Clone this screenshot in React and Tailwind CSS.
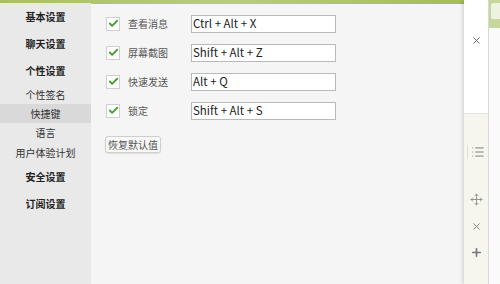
import { Check, X, Plus, Move, List } from "lucide-react";

const font = { fontFamily: '"Microsoft YaHei", "Noto Sans CJK SC", "Liberation Sans", sans-serif' };

const shortcuts = [
    { label: "查看消息", keys: "Ctrl + Alt + X" },
    { label: "屏幕截图", keys: "Shift + Alt + Z" },
    { label: "快速发送", keys: "Alt + Q" },
    { label: "锁定", keys: "Shift + Alt + S" },
];

function SideItem({ children, bold, active }) {
    return (
        <div
            className={`flex items-center justify-center ${bold ? "h-[27px] font-bold text-[10px] text-[#222]" : "h-[19px] text-[10px] text-[#333]"} ${active ? "bg-[#d9d9d9]" : ""}`}
        >
            {children}
        </div>
    );
}

export default function App() {
    return (
        <div className="w-[500px] h-[284px] flex overflow-hidden bg-white" style={font}>
            {/* left + main */}
            <div className="w-[464px] flex flex-col">
                <div className="h-[4px] bg-gradient-to-r from-[#a9c060] via-[#b9cd7c] to-[#a4bd55]" />
                <div className="flex flex-1">
                    <div className="w-[91px] bg-[#e9e9e9] flex flex-col -mt-[1px]">
                        <SideItem bold>基本设置</SideItem>
                        <SideItem bold>聊天设置</SideItem>
                        <SideItem bold>个性设置</SideItem>
                        <div className="h-[1px]" />
                        <SideItem>个性签名</SideItem>
                        <SideItem active>快捷键</SideItem>
                        <SideItem>语言</SideItem>
                        <div className="h-[1px]" />
                        <SideItem>用户体验计划</SideItem>
                        <div className="h-[1px]" />
                        <SideItem bold>安全设置</SideItem>
                        <SideItem bold>订阅设置</SideItem>
                    </div>
                    <div className="flex-1 bg-[#f5f5f5] pl-[15px] pt-[11px]">
                        <div className="flex flex-col gap-[12px]">
                            {shortcuts.map((s) => (
                                <div key={s.label} className="flex items-center h-[17px]">
                                    <div className="w-[14px] h-[14px] bg-white border border-[#d0d0d0] flex items-center justify-center">
                                        <Check size={11} strokeWidth={4} className="text-[#45a02f]" />
                                    </div>
                                    <span className="ml-[8px] w-[63px] text-[10px] text-[#555]">{s.label}</span>
                                    <div className="w-[145px] h-[18px] bg-white border border-[#b9b9b9] flex items-center pl-[1px] text-[11.5px] text-[#222]">
                                        {s.keys}
                                    </div>
                                </div>
                            ))}
                        </div>
                        <button className="mt-[17px] -ml-[1px] h-[17px] px-[2px] border border-[#cfcfcf] rounded-[3px] bg-[#f8f8f8] text-[10px] text-[#555] leading-none shadow-[0_1px_1px_rgba(0,0,0,0.08)]">
                            恢复默认值
                        </button>
                    </div>
                </div>
            </div>
            {/* right strip */}
            <div className="w-[25px] flex flex-col shadow-[-2px_0_3px_rgba(0,0,0,0.12)] border-r border-[#d9d9d0]">
                <div className="h-[113px] bg-white flex flex-col items-center pt-[35px]">
                    <X size={11} strokeWidth={2} className="text-[#666]" />
                </div>
                <div className="flex-1 bg-[#f6f6ef] border-t border-[#e4e4e0] flex flex-col items-center pt-[31px]">
                    <div className="flex items-center">
                        <div className="w-[1px] h-[14px] bg-[#e0e0e0] mr-[3px]" />
                        <List size={14} strokeWidth={1.6} className="text-[#777]" />
                    </div>
                    <Move size={13} strokeWidth={1.6} className="text-[#888] mt-[34px]" />
                    <X size={11} strokeWidth={2} className="text-[#777] mt-[15px]" />
                    <Plus size={13} strokeWidth={3} className="text-[#777] mt-[14px]" />
                </div>
            </div>
            <div className="flex-1 flex flex-col">
                <div className="h-[28px] bg-[#c7d69a] pt-[3px] pl-[2px]">
                    <div className="h-[16px] bg-[#eef2e0] rounded-l-[2px]" />
                </div>
                <div className="flex-1 bg-[#fafafa]" />
            </div>
        </div>
    );
}
